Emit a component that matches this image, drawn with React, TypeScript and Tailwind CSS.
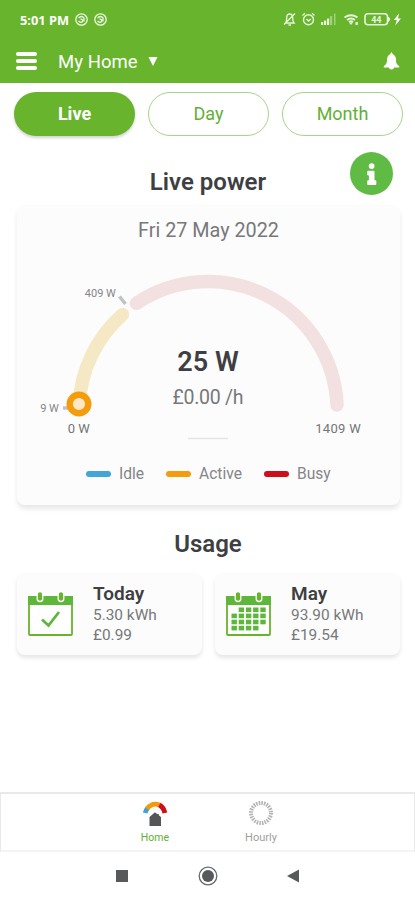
import React from "react";
import clsx from "clsx";

const GREEN = "#68b42d";
const TABS = ["Live", "Day", "Month"];

const LEGEND = [
  { label: "Idle", dot: "bg-[#43a5d8]", item: "w-[80px]" },
  { label: "Active", dot: "bg-[#f39c0c]", item: "w-[98px]" },
  { label: "Busy", dot: "bg-[#cc0f1b]", item: "w-[67px]" },
];

export default function App() {
  return (
    <div className="flex h-[900px] w-[415px] flex-col overflow-hidden bg-white font-['Roboto',sans-serif] text-[#3e3f42]">
      <header className="h-[83px] shrink-0 bg-[#68b42d] text-white">
        <StatusBar />
        <div className="flex h-[46px] items-center pl-4 pr-[15px]">
          <div className="flex w-[21px] flex-col gap-[3px]">
            <span className="h-1 rounded-full bg-white" />
            <span className="h-1 rounded-full bg-white" />
            <span className="h-1 rounded-full bg-white" />
          </div>
          <span className="ml-[21px] mt-px text-[18.5px] leading-6 tracking-[0.05px]">My Home</span>
          <svg className="ml-[10px] h-[9px] w-[10px]" viewBox="0 0 10 9" fill="white">
            <path d="M0.5 0h9L5 9z" />
          </svg>
          <svg className="ml-auto h-[18px] w-[17px]" viewBox="0 0 17 18" fill="white">
            <path d="M8.500 0C9.200.8 9.500 1.500 10 2.300c2 1 3 2.900 3 5.400 0 3.500.8 4.500 3.200 6.400v1.400H.8v-1.400C3.200 12.200 4 11.200 4 7.700c0-2.500 1-4.400 3-5.400C7.500 1.500 7.800.8 8.500 0zM6 15.500h5a2.500 2 0 0 1-5 0z" />
          </svg>
        </div>
      </header>

      <nav className="ml-[14px] mt-[9px] flex h-[44px] w-[389px] shrink-0 gap-[13px]">
        {TABS.map((tab, i) => (
          <button
            key={tab}
            className={clsx(
              "h-[44px] w-[121px] rounded-full pb-px text-[18px] leading-[42px]",
              i === 0
                ? "bg-[#68b42d] font-bold text-white shadow-[0_2px_3px_rgba(0,0,0,0.18)]"
                : "border border-[#a4d58a] text-[#62af35]"
            )}
          >
            {tab}
          </button>
        ))}
      </nav>

      <div className="relative h-[69px] shrink-0">
        <h2 className="pl-px pt-[31px] text-center text-[24px] font-semibold leading-[30px]">Live power</h2>
        <div className="absolute left-[350px] top-[16px] flex size-[43px] items-center justify-center rounded-full bg-[#5fbb43]">
          <svg className="mt-[2px] h-[23px] w-[12px]" viewBox="0 0 12 24" fill="white">
            <circle cx="5.600" cy="3.200" r="3" />
            <path d="M2 8h5.600q1 0 1 1v9h.9q1 0 1 1V22q0 1-1 1H2q-1 0-1-1v-3q0-1 1-1h.8v-5H2q-1 0-1-1V9q0-1 1-1z" />
          </svg>
        </div>
      </div>

      <section className="ml-[17px] h-[300px] w-[383px] shrink-0 rounded-lg bg-[#fcfcfc] shadow-[0_4px_5px_rgba(0,0,0,0.09)]">
        <p className="pt-[13px] text-center text-[19.8px] leading-[25px] text-[#77787a]">Fri 27 May 2022</p>
        <Gauge />
        <div className="flex h-[24px] pl-[69px] pt-[2px]">
          {LEGEND.map((l) => (
            <div key={l.label} className={clsx("flex shrink-0 items-center gap-[8px] text-[15.6px] leading-5 text-[#858688]", l.item)}>
              <span className={clsx("h-[6px] w-[25px] shrink-0 rounded-full", l.dot)} />
              {l.label}
            </div>
          ))}
        </div>
      </section>

      <h2 className="mt-[24px] pl-px text-center text-[24px] font-semibold leading-[30px]">Usage</h2>

      <div className="ml-[17px] mt-[14px] flex shrink-0 gap-[13px]">
        <UsageCard title="Today" energy="5.30 kWh" cost="£0.99" />
        <UsageCard title="May" energy="93.90 kWh" cost="£19.54" month />
      </div>

      <footer className="mt-auto shrink-0">
        <div className="flex h-[60px] border-2 border-x border-[#e9e9e9] border-b-[#f4f4f4] pl-[101px]">
          <div className="flex w-[106px] flex-col items-center">
            <svg className="mt-[6px] h-[26px] w-[26px]" viewBox="0 0 26 26" fill="none" strokeWidth="4.800">
              <path d="M3.200 13Q3.700 10.500 5.700 8" stroke="#3ba3d5" />
              <path d="M5 8.700Q10.500 2 17.500 5" stroke="#f39a0b" />
              <path d="M17.300 4.900Q21.800 7.500 22.900 13" stroke="#cc0f1b" />
              <path d="M13 12.300l2 1.600h1.800v1.300l2.200 1.800V26H7.500v-9z" fill="#555657" />
            </svg>
            <span className="mt-[5px] text-[10.500px] leading-[14px] text-[#62af35]">Home</span>
          </div>
          <div className="flex w-[106px] flex-col items-center">
            <svg className="mt-[6px] h-[26px] w-[26px]" viewBox="0 0 26 26" fill="none">
              <circle cx="13" cy="13" r="10" stroke="#b4b4b4" strokeWidth="4" strokeDasharray="1.600 1.018" />
            </svg>
            <span className="mt-[5px] text-[11px] leading-[14px] text-[#a0a0a0]">Hourly</span>
          </div>
        </div>
        <div className="flex h-[48px] items-center pl-[115px]">
          <svg className="h-[22px] w-[186px]" viewBox="0 0 186 22" fill="#58595a">
            <path d="M1 5h12v12H1z" />
            <circle cx="93" cy="11" r="6" />
            <circle cx="93" cy="11" r="8.800" fill="none" stroke="#68696a" strokeWidth="1.300" />
            <path d="M184 4.500v13L172 11z" />
          </svg>
        </div>
      </footer>
    </div>
  );
}

const StatusBar = () => (
  <div className="flex h-[38px] items-center pl-5 pr-[14px]">
    <span className="mt-px font-['Open_Sans',sans-serif] text-[12.8px] font-bold leading-4">5:01 PM</span>
    <SwirlIcon className="ml-[6px]" />
    <SwirlIcon className="ml-[6px]" />
    <svg className="ml-auto h-[16px] w-[120px]" viewBox="0 0 120 16" fill="none" stroke="#e8f5dd" strokeWidth="1.400">
      {/* muted bell */}
      <path d="M4.500 12h8.500c-1.300-1.500-1.300-3-1.300-5C11.700 4.500 10.500 3 8.700 3S5.700 4.500 5.700 7c0 2 0 3.500-1.200 5zM7.500 14h2.500M14 2.500L3 13.500" />
      {/* alarm clock */}
      <circle cx="27.500" cy="8.700" r="5" />
      <path d="M21.500 4.500l2.500-2.200M33.500 4.500l-2.500-2.200M25.500 8l2 2 2.500-2" />
      {/* signal */}
      <g stroke="none" fill="#e8f5dd">
        <path d="M40 11h2.200v3H40zM43 9.500h2.200V14H43zM46 7.500h2.200V14H46z" />
        <path d="M49 5h2.200v9H49zM53 2.500h1.500V14H53z" opacity="0.45" />
      </g>
      {/* wifi */}
      <path d="M63.500 6.500q6.500-4.500 13 0M66 9q4-3 8 0M68 11q2-1.500 4 0" strokeWidth="1.900" />
      <path d="M70 14l-2-2.500h4zM74.500 11h2.300v3h-2.300z" fill="#e8f5dd" stroke="none" />
      {/* battery */}
      <rect x="84" y="2.800" width="22.500" height="11" rx="3" strokeWidth="1.600" />
      <path d="M107.500 6q2.500 2.200 0 4.500z" fill="#e8f5dd" strokeWidth="1" />
      <text x="95.300" y="11.500" textAnchor="middle" fill="#e8f5dd" stroke="none" fontSize="9" fontWeight="700">44</text>
      <path d="M118 2.500l-5.200 6.500h3l-1.500 5.500 5.700-7h-3z" fill="white" stroke="none" />
    </svg>
  </div>
);

const SwirlIcon = ({ className }: { className?: string }) => (
  <svg className={clsx("size-[13px]", className)} viewBox="0 0 13 13" fill="none" stroke="#eef8e6" strokeWidth="1.300">
    <circle cx="6.500" cy="6.500" r="5.700" />
    <path d="M3.500 5q3-3 5.500 0v3.500M3.500 8q2.500 2.500 4 .5 1-2-2-2.500" />
  </svg>
);

const Gauge = () => (
  <svg className="h-[218px] w-[383px]" viewBox="17 243 383 218" fill="none">
    <g strokeWidth="13.500" strokeLinecap="round">
      <path d="M79.100 405A129 129 0 0 1 122.500 314.500" stroke="#f5e8c4" />
      <path d="M136.500 303.300A129 129 0 0 1 337 405" stroke="#f3e0e0" />
    </g>
    <path d="M119.500 296.500l6 7.500M63 408h6" stroke="#c2c2c2" strokeWidth="3.500" />
    <circle cx="79" cy="404" r="9.300" fill="#fce8c7" stroke="#f39c0c" strokeWidth="6.400" />
    <g fill="#858688" fontSize="11" textAnchor="middle">
      <text x="100.300" y="297">409 W</text>
      <text x="49.500" y="411.500">9 W</text>
      <text x="78.800" y="433" fontSize="13" fill="#747577">0 W</text>
      <text x="338" y="433" fontSize="13" fill="#747577" textLength="45.500">1409 W</text>
    </g>
    <text x="208" y="370.500" fontSize="27" fontWeight="600" fill="#3e3f42" textAnchor="middle">25 W</text>
    <text x="208" y="403.500" fontSize="19.500" fill="#77787a" textAnchor="middle" textLength="71">£0.00 /h</text>
    <path d="M188 438.500h40" stroke="#e5e5e5" strokeWidth="1.500" />
  </svg>
);

type UsageCardProps = { title: string; energy: string; cost: string; month?: boolean };

const UsageCard = ({ title, energy, cost, month }: UsageCardProps) => (
  <div className="flex h-[82px] w-[185px] rounded-lg bg-[#fcfcfc] pl-[11px] pt-[10px] shadow-[0_3px_4px_rgba(0,0,0,0.1)]">
    <CalendarIcon month={month} />
    <div className="ml-[20px] text-[15.4px] leading-5 text-[#77787a]">
      <h3 className="text-[19px] font-semibold leading-[22px] text-[#3e3f42]">{title}</h3>
      <p>{energy}</p>
      <p>{cost}</p>
    </div>
  </div>
);

const CalendarIcon = ({ month }: { month?: boolean }) => (
  <svg className="mt-[8px] h-[46px] w-[45px] shrink-0" viewBox="0 0 45 46" fill="none">
    <rect x="1" y="6" width="43" height="38" rx="1" fill="white" stroke={GREEN} strokeWidth="1.800" />
    <path d="M0 5h45v9H0z" fill="#5eb63b" />
    {[12, 33].map((x) => (
      <rect key={x} x={x - 2.800} y="0.500" width="5.600" height="10" rx="2.800" fill={GREEN} stroke="white" strokeWidth="1.300" />
    ))}
    {month
      ? [0, 1, 2, 3].map((row) =>
          [0, 1, 2, 3, 4].map((col) =>
            (row === 0 && col === 0) || (row === 3 && col === 4) ? null : (
              <rect key={`${row}-${col}`} x={5.500 + col * 7.200} y={16.500 + row * 6.100} width="5.400" height="4.600" fill="#5eb63b" />
            )
          )
        )
      : <path d="M14 28.500l6.500 6L31 21" stroke="#5eb63b" strokeWidth="2.800" />}
  </svg>
);
